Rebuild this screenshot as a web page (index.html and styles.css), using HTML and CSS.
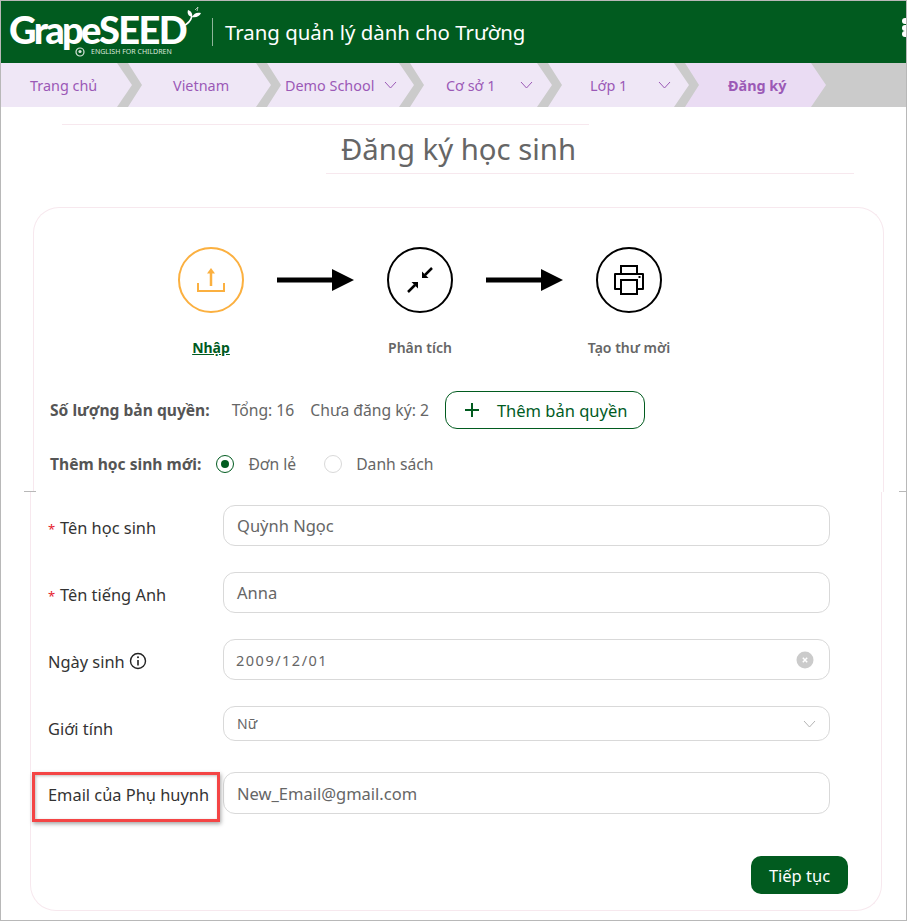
FILE: index.html
```html
<!DOCTYPE html>
<html lang="vi">
<head>
    <meta charset="UTF-8">
    <meta name="viewport" content="width=device-width, initial-scale=1.0">
    <title>Đăng ký học sinh - GrapeSEED</title>
    <link rel="stylesheet" href="styles.css">
</head>
<body>
    <div class="page">
        <!-- Header -->
        <div class="header">
            <div class="logo">
                <div class="logo-name">Grape<span>SEED</span></div>
                <svg class="logo-leaf" width="20" height="22" viewBox="0 0 20 22">
                    <path d="M1 20C6 18 9 14 10 10" fill="none" stroke="#fff" stroke-width="1.6"/>
                    <path d="M10 11C6 10 5 7 6 4C9 5 11 8 10 11Z" fill="#fff"/>
                    <path d="M10 11C12 7 15 6 19 7C18 10 14 12 10 11Z" fill="#fff"/>
                    <path d="M13 4L16 1L15 5" fill="none" stroke="#cfe0d3" stroke-width="0.8"/>
                </svg>
                <div class="logo-sub">
                    <svg width="10" height="10" viewBox="0 0 10 10">
                        <circle cx="5" cy="5" r="4" fill="none" stroke="#d9e6dc" stroke-width="1.2"/>
                        <circle cx="5" cy="4.5" r="1.6" fill="#d9e6dc"/>
                    </svg>
                    <span>ENGLISH FOR CHILDREN</span>
                </div>
            </div>
            <div class="app-title">Trang quản lý dành cho Trường</div>
            <div class="dots"><i></i><i></i><i></i></div>
        </div>

        <!-- Breadcrumb -->
        <div class="crumbs">
            <div class="crumb c1">Trang chủ</div>
            <div class="crumb c2">Vietnam</div>
            <div class="crumb c3">Demo School
                <svg class="chev" width="13" height="8" viewBox="0 0 13 8"><path d="M1 1L6.5 7L12 1" fill="none" stroke="#9b59b6" stroke-width="1"/></svg>
            </div>
            <div class="crumb c4">Cơ sở 1
                <svg class="chev" width="13" height="8" viewBox="0 0 13 8"><path d="M1 1L6.5 7L12 1" fill="none" stroke="#9b59b6" stroke-width="1"/></svg>
            </div>
            <div class="crumb c5">Lớp 1
                <svg class="chev" width="13" height="8" viewBox="0 0 13 8"><path d="M1 1L6.5 7L12 1" fill="none" stroke="#9b59b6" stroke-width="1"/></svg>
            </div>
            <div class="crumb c6 active">Đăng ký</div>
        </div>

        <!-- Title -->
        <div class="title-wrap">
            <div class="rule-top"></div>
            <h1>Đăng ký học sinh</h1>
            <div class="rule-bottom"></div>
        </div>

        <!-- Top card -->
        <div class="card-top">
            <div class="steps">
                <div class="step current">
                    <div class="circle">
                        <svg width="28" height="26" viewBox="0 0 28 26">
                            <path d="M1 16V24H27V16" fill="none" stroke="#fbb040" stroke-width="2"/>
                            <path d="M14 19V5" stroke="#fbb040" stroke-width="2.500"/>
                            <path d="M10 6.500L14 1L18 6.500Z" fill="#fbb040"/>
                        </svg>
                    </div>
                    <div class="step-label">Nhập</div>
                </div>
                <svg class="arrow" width="79" height="22" viewBox="0 0 79 22"><path d="M1 8.500H56V0L78 11L56 22V13.500H1Z" fill="#000"/></svg>
                <div class="step">
                    <div class="circle">
                        <svg width="26" height="26" viewBox="0 0 26 26">
                            <path d="M25 1L18 8" stroke="#000" stroke-width="2.500"/>
                            <path d="M15 11V4.500L21.500 11Z" fill="#000"/>
                            <path d="M1 25L8 18" stroke="#000" stroke-width="2.500"/>
                            <path d="M11 15V21.500L4.500 15Z" fill="#000"/>
                        </svg>
                    </div>
                    <div class="step-label">Phân tích</div>
                </div>
                <svg class="arrow" width="79" height="22" viewBox="0 0 79 22"><path d="M1 8.500H56V0L78 11L56 22V13.500H1Z" fill="#000"/></svg>
                <div class="step">
                    <div class="circle">
                        <svg width="30" height="30" viewBox="0 0 30 30">
                            <path d="M7 9V1H23V9" fill="none" stroke="#000" stroke-width="2"/>
                            <path d="M7 24H1V9H29V24H23" fill="none" stroke="#000" stroke-width="2" stroke-linejoin="round"/>
                            <rect x="7" y="15" width="16" height="14" fill="none" stroke="#000" stroke-width="2"/>
                            <rect x="24.500" y="11" width="2" height="2" fill="#000"/>
                        </svg>
                    </div>
                    <div class="step-label">Tạo thư mời</div>
                </div>
            </div>

            <div class="license-row">
                <strong class="row-label">Số lượng bản quyền:</strong>
                <span class="count-total">Tổng: 16</span>
                <span class="count-left">Chưa đăng ký: 2</span>
                <div class="button-outline">
                    <svg width="14" height="14" viewBox="0 0 14 14"><path d="M7 0V14M0 7H14" stroke="#015b1f" stroke-width="2"/></svg>
                    <span>Thêm bản quyền</span>
                </div>
            </div>

            <div class="radio-row">
                <strong class="row-label">Thêm học sinh mới:</strong>
                <span class="radio checked"></span>
                <span class="radio-text first">Đơn lẻ</span>
                <span class="radio"></span>
                <span class="radio-text">Danh sách</span>
            </div>
        </div>

        <!-- Form card -->
        <div class="card-bottom">
            <div class="form-row row-name">
                <div class="label"><span class="star">*</span>Tên học sinh</div>
                <div class="field">Quỳnh Ngọc</div>
            </div>
            <div class="form-row row-name">
                <div class="label"><span class="star">*</span>Tên tiếng Anh</div>
                <div class="field">Anna</div>
            </div>
            <div class="form-row row-name">
                <div class="label">Ngày sinh
                    <svg class="info" width="18" height="18" viewBox="0 0 18 18">
                        <circle cx="9" cy="9" r="7.500" fill="none" stroke="#222" stroke-width="1.400"/>
                        <path d="M9 8V13.500" stroke="#222" stroke-width="1.600"/>
                        <circle cx="9" cy="5.300" r="1" fill="#222"/>
                    </svg>
                </div>
                <div class="field date">2009/12/01
                    <svg width="18" height="18" viewBox="0 0 18 18">
                        <circle cx="9" cy="9" r="8.500" fill="#cbcbcb"/>
                        <path d="M6.800 6.800L11.200 11.200M11.200 6.800L6.800 11.200" stroke="#fff" stroke-width="1.500"/>
                    </svg>
                </div>
            </div>
            <div class="form-row row-select">
                <div class="label">Giới tính</div>
                <div class="field select">Nữ
                    <svg width="13" height="8" viewBox="0 0 13 8"><path d="M1 1L6.500 7L12 1" fill="none" stroke="#b4b4b4" stroke-width="1"/></svg>
                </div>
            </div>
            <div class="form-row row-email">
                <div class="label">Email của Phụ huynh</div>
                <div class="field">New_Email@gmail.com</div>
            </div>
            <div class="form-actions">
                <div class="button">Tiếp tục</div>
            </div>
            <div class="callout"></div>
        </div>

        <!-- stitching gaps of the frame -->
        <div class="gap-left"></div>
        <div class="tick-left"></div>
        <div class="tick-right"></div>
    </div>
</body>
</html>
```

FILE: styles.css
```css
* {
    box-sizing: border-box;
}
body {
    margin: 0;
    background: #fff;
    font-family: "Noto Sans", "Open Sans", sans-serif;
    color: #333;
}
.page {
    position: relative;
    width: 907px;
    height: 921px;
    border: 1px solid #b8b8b8;
    overflow: hidden;
    background: #fff;
}

/* header */
.header {
    display: flex;
    align-items: center;
    height: 62px;
    background: #015b1f;
    color: #fff;
}
.logo {
    position: relative;
    width: 211px;
    height: 62px;
    flex: none;
}
.logo-name {
    position: absolute;
    left: 8px;
    top: 11px;
    font-family: Lato, "Noto Sans", sans-serif;
    font-weight: 900;
    font-size: 38px;
    line-height: 34px;
    letter-spacing: -2.6px;
    color: #fff;
}
.logo-name span {
    letter-spacing: -1.6px;
}
.logo-leaf {
    position: absolute;
    left: 181px;
    top: 5px;
}
.logo-sub {
    position: absolute;
    left: 74px;
    top: 46px;
    display: flex;
    align-items: center;
    gap: 6px;
    font-size: 7px;
    line-height: 8px;
    color: #d9e6dc;
    white-space: nowrap;
}
.app-title {
    flex: 1;
    height: 28px;
    padding-left: 12px;
    border-left: 1px solid #8fb59b;
    font-size: 20.400px;
    line-height: 28px;
}
.dots {
    display: flex;
    flex-direction: column;
    gap: 0.500px;
    margin-right: -2px;
    margin-top: -9px;
}
.dots i {
    display: block;
    width: 6px;
    height: 6px;
    border-radius: 50%;
    background: #fff;
}

/* breadcrumb */
.crumbs {
    display: flex;
    height: 44px;
    background: #cbcbcb;
}
.crumb {
    display: flex;
    align-items: center;
    height: 44px;
    margin-left: -4px;
    background: #efe7f6;
    color: #9b59b6;
    font-size: 14.400px;
    white-space: nowrap;
    clip-path: polygon(0 0, calc(100% - 15px) 0, 100% 50%, calc(100% - 15px) 100%, 0 100%, 14px 50%);
}
.c1 { width: 131px; margin-left: 0; padding-left: 29px; clip-path: polygon(0 0, calc(100% - 15px) 0, 100% 50%, calc(100% - 15px) 100%, 0 100%); }
.c2 { width: 143px; padding-left: 45px; }
.c3 { width: 147px; padding-left: 18px; }
.c4 { width: 142px; padding-left: 36px; }
.c5 { width: 141px; padding-left: 42px; }
.c6 { width: 141px; padding-left: 43px; }
.crumb.active {
    background: #eadcf3;
    font-weight: 700;
}
.c3 .chev { margin-left: 10px; }
.c4 .chev { margin-left: 25px; }
.c5 .chev { margin-left: 31px; }

/* title */
.title-wrap {
    height: 67px;
    margin-top: 17px;
}
.rule-top {
    width: 527px;
    margin-left: 61px;
    border-top: 1px solid #f7e8ee;
}
h1 {
    margin: 0 0 0 10px;
    height: 48px;
    font-size: 29.300px;
    font-weight: 400;
    line-height: 48px;
    text-align: center;
    color: #666;
}
.rule-bottom {
    width: 528px;
    margin-left: 325px;
    border-top: 1px solid #f7e8ee;
}

/* cards */
.card-top {
    width: 851px;
    height: 285px;
    margin-top: 16px;
    margin-left: 32px;
    padding-top: 39px;
    border: 1px solid #f7e8ee;
    border-bottom: 0;
    border-radius: 26px 26px 0 0;
}
.card-bottom {
    position: relative;
    width: 852px;
    height: 419px;
    margin-left: 29px;
    padding-top: 13px;
    border: 1px solid #f7e8ee;
    border-top: 0;
    border-radius: 0 0 26px 26px;
}

/* steps */
.steps {
    display: flex;
    align-items: flex-start;
    padding-left: 112px;
}
.step {
    width: 130px;
    text-align: center;
}
.circle {
    display: flex;
    align-items: center;
    justify-content: center;
    width: 66px;
    height: 66px;
    margin: 0 auto;
    border: 2px solid #000;
    border-radius: 50%;
}
.step.current .circle {
    border-color: #fbb040;
}
.step-label {
    margin-top: 25px;
    font-size: 14px;
    font-weight: 600;
    line-height: 20px;
    color: #666;
    white-space: nowrap;
}
.step.current .step-label {
    font-weight: 700;
    color: #015b1f;
    text-decoration: underline;
}
.arrow {
    flex: none;
    margin-top: 22px;
}

/* license + radio rows */
.license-row,
.radio-row {
    display: flex;
    align-items: center;
    padding-left: 16px;
    font-size: 15.700px;
    color: #666;
    white-space: nowrap;
}
.license-row {
    height: 38px;
    margin-top: 33px;
}
.radio-row {
    height: 24px;
    margin-top: 23px;
}
.row-label {
    color: #555;
    font-weight: 700;
    font-size: 15.600px;
}
.count-total {
    margin-left: 22px;
}
.count-left {
    margin-left: 16px;
}
.button-outline {
    display: flex;
    align-items: center;
    width: 200px;
    height: 38px;
    margin-left: 16px;
    padding-left: 19px;
    border: 1px solid #015b1f;
    border-radius: 12px;
    color: #015b1f;
    font-size: 16.500px;
}
.button-outline span {
    margin-left: 18px;
}
.radio {
    flex: none;
    position: relative;
    width: 18px;
    height: 18px;
    border: 1px solid #d9d9d9;
    border-radius: 50%;
}
.radio.checked {
    margin-left: 15px;
    border-color: #015b1f;
}
.radio.checked::after {
    content: "";
    position: absolute;
    left: 4px;
    top: 4px;
    width: 8px;
    height: 8px;
    border-radius: 50%;
    background: #015b1f;
}
.radio-text {
    margin-left: 14px;
}
.radio-text.first {
    margin-right: 28px;
}

/* form */
.form-row {
    display: flex;
    align-items: flex-start;
}
.label {
    display: flex;
    align-items: center;
    flex: none;
    width: 192px;
    height: 44px;
    padding-left: 17px;
    font-size: 16.400px;
    color: #333;
    white-space: nowrap;
}
.star {
    width: 12px;
    padding-top: 3px;
    color: #e5222d;
    font-size: 13px;
}
.info {
    margin-left: 4px;
}
.field {
    display: flex;
    align-items: center;
    justify-content: space-between;
    width: 607px;
    height: 41px;
    padding: 0 13px;
    border: 1px solid #d9d9d9;
    border-radius: 12px;
    font-size: 16.500px;
    color: #666;
}
.field.date {
    padding: 0 15px 0 12px;
    font-size: 14.500px;
    letter-spacing: 1.500px;
}
.field.select {
    height: 35px;
    font-size: 14px;
}
.row-name {
    height: 67px;
}
.row-select {
    height: 66px;
}
.row-email .field {
    height: 42px;
}
.form-actions {
    display: flex;
    justify-content: flex-end;
    margin-top: 40px;
    padding-right: 33px;
}
.button {
    display: flex;
    align-items: center;
    justify-content: center;
    width: 97px;
    height: 38px;
    border-radius: 10px;
    background: #015b1f;
    color: #fff;
    font-size: 16.500px;
}

/* red highlight over the email label */
.callout {
    position: absolute;
    left: 1px;
    top: 280px;
    width: 188px;
    height: 50px;
    border: 3px solid #f44545;
    box-shadow: 1px 2px 4px rgba(0, 0, 0, 0.35), inset 1px 1px 3px rgba(0, 0, 0, 0.25);
}

/* frame breaks where the two screenshots were joined */
.gap-left {
    position: absolute;
    left: -1px;
    top: 484px;
    width: 3px;
    height: 12px;
    background: #fff;
}
.tick-left {
    position: absolute;
    left: 23px;
    top: 490px;
    width: 12px;
    border-top: 1px solid #b8b8b8;
}
.tick-right {
    position: absolute;
    right: -1px;
    top: 490px;
    width: 8px;
    border-top: 1px solid #b8b8b8;
}
```
